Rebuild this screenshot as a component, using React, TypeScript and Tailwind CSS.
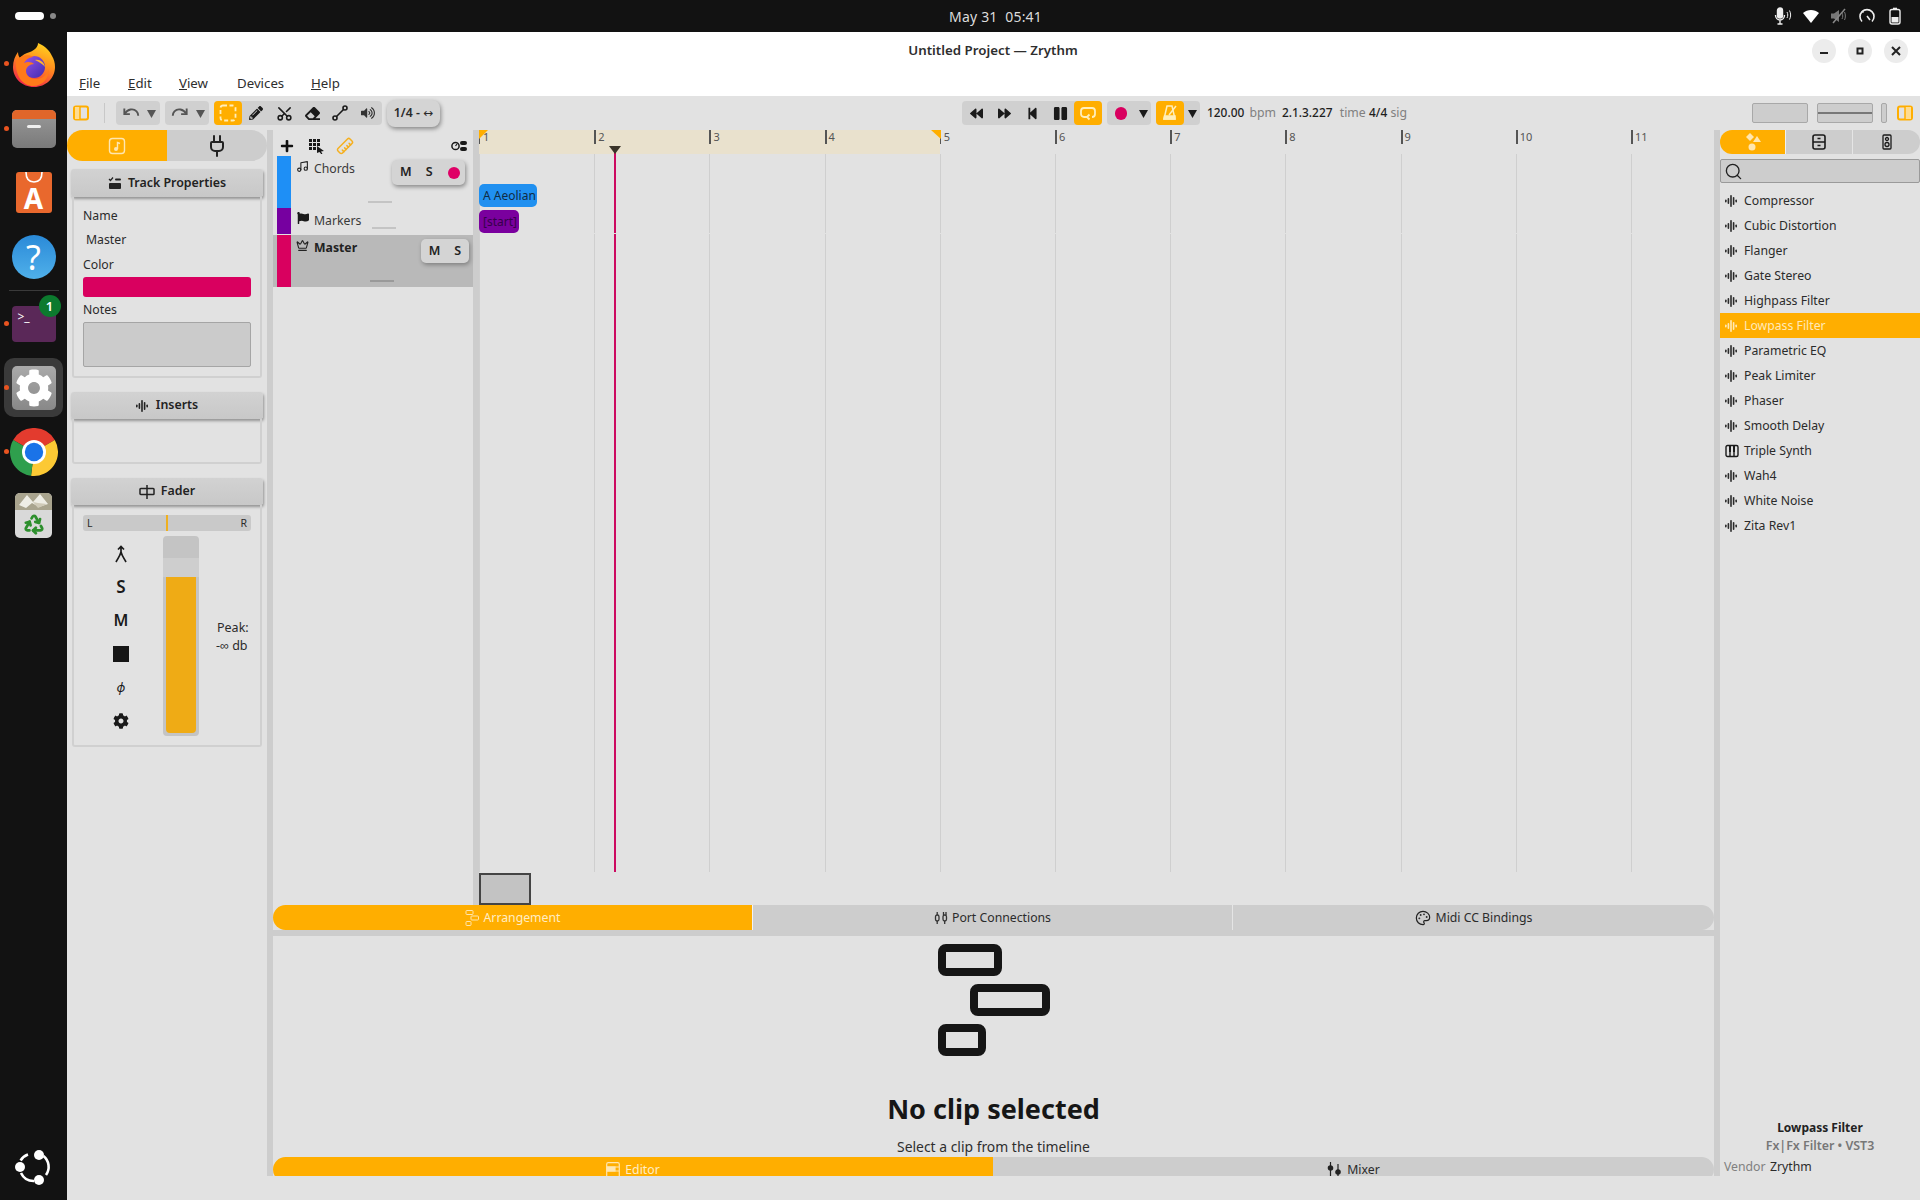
import React from "react";
import { FaBackward, FaForward, FaStepBackward, FaPause, FaPencilAlt, FaEraser, FaVolumeUp, FaPlus, FaCog, FaFlag } from "react-icons/fa";
import { Search, Music, Crown, Palette, Ruler, Scissors, Recycle, Plug } from "lucide-react";

const Wave = ({ c = "#1a1a1a", s = 14 }: { c?: string; s?: number }) => (
  <svg width={s} height={s} viewBox="0 0 14 14" fill={c}>
    <rect x="0" y="5.5" width="1.6" height="3" rx=".8" />
    <rect x="2.6" y="4" width="1.6" height="6" rx=".8" />
    <rect x="5.2" y="1" width="1.6" height="12" rx=".8" />
    <rect x="7.8" y="3" width="1.6" height="8" rx=".8" />
    <rect x="10.4" y="5.5" width="1.6" height="3" rx=".8" />
  </svg>
);

const Piano = () => (
  <svg width="14" height="14" viewBox="0 0 14 14" fill="none" stroke="#1a1a1a" strokeWidth="1.4">
    <rect x="1" y="1.5" width="12" height="11" rx="1.5" />
    <path d="M5 2v10M9 2v10" />
    <path d="M4 2h2v6H4zM8 2h2v6H8z" fill="#1a1a1a" stroke="none" />
  </svg>
);

const PanelIcon = ({ right }: { right?: boolean }) => (
  <svg width="16" height="16" viewBox="0 0 16 16" fill="none">
    <rect x="1" y="1.5" width="14" height="13" rx="2" stroke="#ffae00" strokeWidth="2" />
    {right ? <rect x="8" y="2" width="6" height="12" fill="#ffdc90" /> : <rect x="2" y="2" width="5" height="12" fill="#ffdc90" />}
    <path d={right ? "M8 2v12" : "M7 2v12"} stroke="#ffae00" strokeWidth="1.5" />
  </svg>
);

const Tri = ({ c = "#333" }: { c?: string }) => (
  <svg width="9" height="9" viewBox="0 0 9 9" fill={c}><path d="M0 1h9L4.5 9z" /></svg>
);

const ArrangeIcon = ({ c }: { c: string }) => (
  <svg width="14" height="16" viewBox="0 0 14 16" fill="none" stroke={c} strokeWidth="1">
    <rect x="1" y="0.5" width="7" height="4" rx=".8" />
    <rect x="6" y="6" width="7.5" height="4" rx=".8" />
    <rect x="1" y="11.5" width="5" height="4" rx=".8" />
  </svg>
);

const Firefox = () => (
  <svg width="42" height="44" viewBox="0 0 42 44">
    <defs>
      <linearGradient id="ff1" x1="0.7" y1="0" x2="0.3" y2="1">
        <stop offset="0" stopColor="#ffd21f" />
        <stop offset="0.45" stopColor="#ff8a1e" />
        <stop offset="1" stopColor="#f0224c" />
      </linearGradient>
      <linearGradient id="ff2" x1="0" y1="0" x2="1" y2="1">
        <stop offset="0" stopColor="#9a55e8" />
        <stop offset="1" stopColor="#3f2bb0" />
      </linearGradient>
    </defs>
    <path d="M21 44C9 44 0 35 0 24 0 18 2 13 5 9c0 3 1 5 2 6 2-3 6-5 10-6 5-2 8-5 8-9 7 3 12 8 14 13 2 3 3 7 3 11 0 11-9 20-21 20z" fill="url(#ff1)" />
    <circle cx="21" cy="24" r="11" fill="url(#ff2)" />
    <path d="M3 18c4-6 12-7 18-4-4 0-8 2-10 6 4-2 8-1 10 1-4 0-8 3-8 7 0 5 5 8 10 8 6 0 11-4 13-10 0 9-6 17-16 17C10 43 2 33 3 18z" fill="#ff7a1a" />
    <path d="M22 17c5-1 9 2 10 7-2-3-6-5-10-7z" fill="#ffb52e" />
  </svg>
);

const Chrome = () => (
  <svg width="48" height="48" viewBox="0 0 48 48">
    <path d="M3.2 12A24 24 0 0 1 44.8 12L24 24Z" fill="#e33b2e" />
    <path d="M44.8 12A24 24 0 0 1 21 47.8L24 24Z" fill="#fcc934" />
    <path d="M21 47.8A24 24 0 0 1 3.2 12L24 24Z" fill="#2f9f4d" />
    <circle cx="24" cy="24" r="12" fill="#fff" />
    <circle cx="24" cy="24" r="9.2" fill="#1a73e8" />
  </svg>
);

const UbuntuLogo = () => (
  <svg width="36" height="36" viewBox="0 0 36 36">
    <path d="M13 5.500A14 14 0 0 0 5.600 11.500" stroke="#fff" strokeWidth="2.600" fill="none" />
    <path d="M6 24A14 14 0 0 0 19 32" stroke="#fff" strokeWidth="2.600" fill="none" />
    <path d="M28.500 7A14 14 0 0 1 31 26" stroke="#fff" strokeWidth="2.600" fill="none" />
    <circle cx="24" cy="6" r="5" fill="#fff" />
    <circle cx="5" cy="18" r="5" fill="#fff" />
    <circle cx="24" cy="31" r="5" fill="#fff" />
  </svg>
);

const Dot = ({ y }: { y: string }) => <span className={`absolute left-[4px] w-[5px] h-[5px] rounded-full bg-[#e95420] ${y}`} />;

function Dock() {
  return (
    <div className="relative w-[67px] shrink-0 bg-[#121212] flex flex-col items-center">
      <div className="mt-[11px] h-[44px] flex items-center justify-center"><Firefox /></div>
      <div className="mt-[23px] w-[44px] h-[38px] rounded-[5px] bg-gradient-to-b from-[#9a9a9a] to-[#7a7a7a] relative overflow-hidden">
        <div className="h-[9px] bg-[#e0662a]" />
        <div className="absolute left-[15px] top-[15px] w-[14px] h-[3px] rounded-sm bg-[#eee]" />
      </div>
      <div className="mt-[24px] w-[36px] h-[41px] rounded-[3px] bg-[#e9682d] flex items-end justify-center relative">
        <svg className="absolute top-0 left-[8px]" width="20" height="12" viewBox="0 0 20 12" fill="none"><path d="M2 0c0 7 3 10 8 10s8-3 8-10" stroke="#fff" strokeWidth="1.600" /></svg>
        <span className="text-white font-bold text-[28px] leading-[29px]">A</span>
      </div>
      <div className="mt-[22px] w-[44px] h-[44px] rounded-full bg-gradient-to-b from-[#2a8ad8] to-[#4fb0ea] flex items-center justify-center text-white text-[34px] leading-none">?</div>
      <div className="mt-[11px] w-[50px] h-[1px] bg-[#3a3a3a]" />
      <div className="mt-[15px] w-[44px] h-[36px] rounded-[4px] bg-[#5a2858] relative pl-[6px] pt-[4px] text-white text-[12px] leading-[14px]">
        <span>&gt;_</span>
        <span className="absolute -right-[5px] -top-[11px] w-[22px] h-[22px] rounded-full bg-[#0c7a2e] text-white text-[13px] font-semibold flex items-center justify-center">1</span>
      </div>
      <div className="mt-[16px] w-[59px] h-[59px] rounded-[10px] bg-[#3a3a3a] flex items-center justify-center">
        <div className="w-[44px] h-[44px] rounded-[5px] bg-gradient-to-b from-[#aaa] to-[#888] flex items-center justify-center">
          <FaCog className="text-white" size={38} />
        </div>
      </div>
      <div className="mt-[11px]"><Chrome /></div>
      <div className="mt-[17px] w-[37px] h-[45px] rounded-[5px] bg-[#d9d9d9] flex flex-col items-center overflow-hidden">
        <svg width="37" height="17" viewBox="0 0 37 17"><rect width="37" height="17" fill="#a9a48e" /><path d="M4 12L12 2l6 7 7-8 8 10-9 3-7-4-6 5z" fill="#efeee6" /><path d="M18 9l5 6 9-4-9-1z" fill="#cfcab8" /></svg>
        <Recycle className="mt-[3px] text-[#2d8f2d]" size={22} strokeWidth={3} />
      </div>
      <div className="absolute left-[15px] bottom-[15px]"><UbuntuLogo /></div>
      <Dot y="top-[29px]" />
      <Dot y="top-[94px]" />
      <Dot y="top-[289px]" />
      <Dot y="top-[353px]" />
      <Dot y="top-[417px]" />
    </div>
  );
}

function TopBar() {
  return (
    <div className="relative h-[32px] shrink-0 bg-[#121212] flex items-center">
      <span className="ml-[15px] w-[29px] h-[8px] rounded-full bg-white" />
      <span className="ml-[6px] w-[6px] h-[6px] rounded-full bg-[#888]" />
      <span className="absolute left-[949px] text-[#dcdcdc] text-[14px] tracking-[0.2px] whitespace-pre">May 31  05:41</span>
      <div className="ml-auto mr-[16px] flex items-center gap-[10px]">
        <svg width="18" height="18" viewBox="0 0 18 18" fill="none" stroke="#eee" strokeWidth="1.400">
          <rect x="3.500" y="1" width="5" height="10" rx="2.500" fill="#eee" />
          <path d="M1.500 8c0 3 2 5 4.500 5s4.500-2 4.500-5M6 13v4M3.500 17h5" />
          <path d="M13 5c1 2 1 4 0 6M15.500 3.500c1.500 3 1.500 6 0 9" strokeWidth="1" />
        </svg>
        <svg width="18" height="18" viewBox="0 0 18 18" fill="#fff"><path d="M1 6c4.500-4 11.500-4 16 0L9 16z" /></svg>
        <svg width="18" height="18" viewBox="0 0 18 18" fill="#777"><path d="M1 6.500h3L9 3v12l-5-3.500H1z" /><path d="M3 16L15 2" stroke="#888" strokeWidth="1.500" /><path d="M12 6c1 2 1 4 0 6M14.500 5c1.200 2.500 1.200 5.500 0 8" stroke="#777" fill="none" /></svg>
        <svg width="18" height="18" viewBox="0 0 18 18" fill="none" stroke="#eee" strokeWidth="1.600"><path d="M4 14.500A7 7 0 1 1 14 14.500" /><path d="M9 9l3 4" /><path d="M5.500 5.500l-1.500-1.500" /></svg>
        <svg width="18" height="18" viewBox="0 0 18 18" fill="none"><rect x="4" y="2.500" width="10" height="14.500" rx="2" stroke="#eee" strokeWidth="1.400" /><rect x="7" y="0.700" width="4" height="2" fill="#eee" /><rect x="5.500" y="10" width="7" height="5.500" fill="#eee" /></svg>
      </div>
    </div>
  );
}

function WinBtn({ children }: { children: React.ReactNode }) {
  return <div className="w-[24px] h-[24px] rounded-full bg-[#ececec] flex items-center justify-center">{children}</div>;
}

function TitleBar() {
  return (
    <div className="relative h-[39px] shrink-0 bg-white flex items-center justify-center">
      <span className="ml-[-1px] mb-[1px] text-[13.3px] font-semibold text-[#2e2e2e]">Untitled Project — Zrythm</span>
      <div className="absolute right-[12px] top-[7px] flex gap-[12px]">
        <WinBtn><svg width="10" height="10" viewBox="0 0 10 10" fill="#222"><rect x="1" y="6" width="8" height="2" /></svg></WinBtn>
        <WinBtn><svg width="8" height="8" viewBox="0 0 8 8" fill="none" stroke="#222" strokeWidth="2"><rect x="1.500" y="1.500" width="5" height="5" /></svg></WinBtn>
        <WinBtn><svg width="10" height="10" viewBox="0 0 10 10" stroke="#222" strokeWidth="2"><path d="M1 1l8 8M9 1l-8 8" /></svg></WinBtn>
      </div>
    </div>
  );
}

function MenuBar() {
  return (
    <div className="h-[25px] shrink-0 bg-white flex items-center pl-[12px] pt-[1px] text-[13.25px] text-[#2e2e2e]">
      <span className="w-[49px]"><u>F</u>ile</span>
      <span className="w-[51px]"><u>E</u>dit</span>
      <span className="w-[58px]"><u>V</u>iew</span>
      <span className="w-[74px]">Devices</span>
      <span><u>H</u>elp</span>
    </div>
  );
}

const Cell = ({ children, active }: { children?: React.ReactNode; active?: boolean }) => (
  <div className={active ? "w-[28px] h-full bg-[#ffae00] rounded-[4px] flex items-center justify-center" : "w-[28px] h-full flex items-center justify-center"}>{children}</div>
);

function Toolbar() {
  return (
    <div className="h-[34px] shrink-0 flex items-center pl-[6px] text-[12.25px] text-[#1e1e1e]">
      <PanelIcon />
      <div className="ml-[15px] w-[1px] h-[20px] bg-[#c8c8c8]" />
      <div className="ml-[11px] w-[44px] h-[24px] rounded-[4px] bg-[#d0d0d0] flex items-center pl-[5px] gap-[6px]">
        <svg width="20" height="18" viewBox="0 0 18 16" fill="none" stroke="#555" strokeWidth="1.700"><path d="M3 4v5h5" /><path d="M3.500 8.500C6 4.500 11 3.500 14 6.500c1 1 1.500 2.500 1.500 4" /></svg>
        <Tri c="#555" />
      </div>
      <div className="ml-[5px] w-[44px] h-[24px] rounded-[4px] bg-[#d0d0d0] flex items-center pl-[5px] gap-[6px]">
        <svg width="20" height="18" viewBox="0 0 18 16" fill="none" stroke="#555" strokeWidth="1.700"><path d="M15 4v5h-5" /><path d="M14.500 8.500C12 4.500 7 3.500 4 6.500c-1 1-1.500 2.500-1.500 4" /></svg>
        <Tri c="#555" />
      </div>
      <div className="ml-[5px] w-[168px] h-[24px] rounded-[4px] bg-[#d0d0d0] flex items-center">
        <Cell active><svg width="18" height="18" viewBox="0 0 18 18" fill="none" stroke="#ffeebb" strokeWidth="1.800" strokeDasharray="4 2.500"><rect x="1.500" y="1.500" width="15" height="15" rx="2.500" /></svg></Cell>
        <Cell><FaPencilAlt size={14} className="text-[#1a1a1a]" /></Cell>
        <Cell><Scissors size={17} strokeWidth={2.200} className="text-[#1a1a1a] -rotate-90" /></Cell>
        <Cell><FaEraser size={15} className="text-[#1a1a1a]" /></Cell>
        <Cell><svg width="16" height="16" viewBox="0 0 16 16" fill="none" stroke="#1a1a1a" strokeWidth="1.600"><circle cx="3" cy="13" r="2" /><circle cx="13" cy="3" r="2" /><path d="M4.500 11.500l7-7" /></svg></Cell>
        <Cell><FaVolumeUp size={14} className="text-[#333]" /></Cell>
      </div>
      <div className="ml-[5px] w-[53px] h-[27px] rounded-[8px] bg-[#d4d4d4] shadow-[1px_2px_4px_rgba(0,0,0,0.4)] flex items-center justify-center font-semibold text-[12.25px] text-[#2a2a2a] whitespace-pre">1/4 - <span className="font-['DejaVu_Sans',sans-serif] font-normal text-[12px]">↔</span></div>
      <div className="ml-[522px] w-[140px] h-[24px] rounded-[4px] bg-[#d0d0d0] flex items-center">
        <Cell><FaBackward size={13} className="text-[#1a1a1a]" /></Cell>
        <Cell><FaForward size={13} className="text-[#1a1a1a]" /></Cell>
        <Cell><FaStepBackward size={13} className="text-[#1a1a1a]" /></Cell>
        <Cell><FaPause size={15} className="text-[#1a1a1a]" /></Cell>
        <Cell active><svg width="18" height="16" viewBox="0 0 18 16" fill="none" stroke="#ffeebb" strokeWidth="1.800"><path d="M9 12H5a3 3 0 0 1-3-3V6a3 3 0 0 1 3-3h8a3 3 0 0 1 3 3v3a3 3 0 0 1-3 3" /><path d="M10.500 9.500L8 12l2.500 2.500" /></svg></Cell>
      </div>
      <div className="ml-[5px] w-[44px] h-[24px] rounded-[4px] bg-[#d0d0d0] flex items-center">
        <Cell><span className="w-[12px] h-[13px] rounded-full bg-[#d9005f]" /></Cell>
        <div className="w-[16px] flex justify-center"><Tri c="#1a1a1a" /></div>
      </div>
      <div className="ml-[5px] w-[44px] h-[24px] rounded-[4px] bg-[#d0d0d0] flex items-center">
        <Cell active><svg width="16" height="18" viewBox="0 0 16 18" fill="none" stroke="#ffeebb" strokeWidth="1.500"><path d="M5 2h5l3 13H2z" /><path d="M2.500 12h10.500v3H2z" fill="#ffeebb" /><path d="M7 11l7-9" /></svg></Cell>
        <div className="w-[16px] flex justify-center"><Tri c="#1a1a1a" /></div>
      </div>
      <div className="ml-[7px] w-[75px] whitespace-nowrap"><span className="font-medium text-[11.9px]">120.00</span> <span className="ml-[2px] text-[#808080]">bpm</span></div>
      <div className="w-[87px] whitespace-nowrap"><span className="font-medium text-[11.9px]">2.1.3.227</span> <span className="ml-[4px] text-[#808080]">time</span></div>
      <div className="whitespace-nowrap"><span className="font-medium text-[11.9px]">4/4</span> <span className="text-[#808080]">sig</span></div>
      <div className="ml-auto mr-[7px] flex items-center">
        <div className="w-[56px] h-[20px] rounded-[2px] bg-[#cdcdcd] border border-[#a8a8a8]" />
        <div className="ml-[9px] w-[56px] h-[20px] rounded-[2px] bg-[#cdcdcd] border border-[#a8a8a8] flex items-center"><div className="w-full h-[2px] bg-[#777]" /></div>
        <div className="ml-[8px] w-[6px] h-[20px] rounded-[2px] bg-[#cdcdcd] border border-[#a8a8a8]" />
        <div className="ml-[10px]"><PanelIcon right /></div>
      </div>
    </div>
  );
}

function SectionHeader({ icon, title, tall }: { icon: React.ReactNode; title: string; tall?: boolean }) {
  return (
    <div className={tall ? "ml-[4px] w-[192px] h-[28px] shrink-0 rounded-[3px] bg-gradient-to-b from-[#d2d2d2] to-[#c8c8c8] shadow-[1px_2px_3px_rgba(0,0,0,0.35)] flex items-center justify-center gap-[6px] text-[12.4px] font-semibold text-[#222]" : "ml-[4px] w-[192px] h-[27px] shrink-0 rounded-[3px] bg-gradient-to-b from-[#d2d2d2] to-[#c8c8c8] shadow-[1px_2px_3px_rgba(0,0,0,0.35)] flex items-center justify-center gap-[6px] text-[12.4px] font-semibold text-[#222]"}>
      {icon}
      <span>{title}</span>
    </div>
  );
}

function LeftPanel() {
  return (
    <div className="w-[200px] shrink-0 flex flex-col text-[12.25px] text-[#2b2b2b]">
      <div className="h-[31px] shrink-0 flex">
        <div className="w-[100px] bg-[#ffae00] rounded-l-full flex items-center justify-center">
          <svg width="18" height="18" viewBox="0 0 18 18" fill="none" stroke="#ffe6b0" strokeWidth="1.400"><rect x="1.500" y="1.500" width="15" height="15" rx="3" /><circle cx="8" cy="12" r="2" fill="#ffe6b0" stroke="none" /><path d="M9.500 12V5.500l2.500 1" /></svg>
        </div>
        <div className="flex-1 bg-[#cdcdcd] rounded-r-full flex items-center justify-center">
          <Plug size={24} strokeWidth={2} className="text-[#222]" />
        </div>
      </div>
      <div className="h-[8px] shrink-0" />
      <SectionHeader tall title="Track Properties" icon={
        <svg width="14" height="14" viewBox="0 0 14 14" fill="#222"><path d="M1 3l1.500 1.500L5 1.500" stroke="#222" fill="none" strokeWidth="1.200" /><rect x="7" y="2.500" width="6" height="2" rx="1" /><rect x="1" y="7" width="12" height="6" rx="1" /></svg>
      } />
      <div className="ml-[5px] w-[190px] h-[181px] shrink-0 border-2 border-t-0 border-[#d0d0d0] rounded-b-[3px] px-[9px] pt-[11px]">
        <div className="h-[16px] leading-[16px]">Name</div>
        <div className="mt-[8px] ml-[3px] h-[16px] leading-[16px]">Master</div>
        <div className="mt-[9px] h-[16px] leading-[16px]">Color</div>
        <div className="mt-[4px] w-[168px] h-[20px] rounded-[3px] bg-[#d9005f]" />
        <div className="mt-[5px] h-[16px] leading-[16px]">Notes</div>
        <div className="mt-[4px] w-[168px] h-[45px] rounded-[2px] bg-[#cbcbcb] border border-[#a5a5a5]" />
      </div>
      <div className="h-[14px] shrink-0" />
      <SectionHeader title="Inserts" icon={<Wave c="#222" />} />
      <div className="ml-[5px] w-[190px] h-[45px] shrink-0 border-2 border-t-0 border-[#d0d0d0] rounded-b-[3px]" />
      <div className="h-[14px] shrink-0" />
      <SectionHeader title="Fader" icon={
        <svg width="16" height="16" viewBox="0 0 16 16" fill="none" stroke="#222" strokeWidth="1.500"><rect x="1" y="4.500" width="14" height="6" rx=".8" /><path d="M8 1v14" /></svg>
      } />
      <div className="ml-[5px] w-[190px] h-[242px] shrink-0 border-2 border-t-0 border-[#d0d0d0] rounded-b-[3px] relative">
        <div className="absolute left-[9px] top-[10px] w-[168px] h-[16px] rounded-[3px] bg-[#c9c9c9] flex items-center justify-between px-[4px] text-[10.5px] leading-none">
          <span>L</span><span>R</span>
          <span className="absolute left-[83px] top-0 w-[2px] h-full bg-[#efb020]" />
        </div>
        <div className="absolute left-[89px] top-[31px] w-[36px] h-[200px] rounded-[4px] bg-[#c4c4c4] overflow-hidden flex flex-col items-center">
          <div className="w-full h-[22px] shrink-0" />
          <div className="w-full h-[19px] shrink-0 bg-[#cecece]" />
          <div className="w-[30px] h-[156px] shrink-0 bg-[#efab15] rounded-b-[4px]" />
        </div>
        <div className="absolute left-[37px] top-[32px] w-[20px] flex flex-col items-center text-[#1a1a1a]">
          <div className="h-[33px] flex items-center">
            <svg width="14" height="18" viewBox="0 0 14 18" fill="none" stroke="#1a1a1a" strokeWidth="1.700"><path d="M7 2v5M4 4.500L7 1.500l3 3" /><path d="M7 7C6 11 4 13 2 17M7 7c1 4 3 6 5 10" /></svg>
          </div>
          <div className="h-[33px] flex items-center text-[17px] font-semibold">S</div>
          <div className="h-[34px] flex items-center text-[16px] font-semibold">M</div>
          <div className="h-[33px] flex items-center"><div className="w-[16px] h-[16px] bg-[#161616]" /></div>
          <div className="h-[34px] flex items-center text-[13px] italic leading-none">ϕ</div>
          <div className="h-[33px] flex items-center"><FaCog size={16} /></div>
        </div>
        <div className="absolute left-[142px] top-[114px] leading-[18px] text-[12.5px] whitespace-nowrap">
          <div className="ml-[1px]">Peak:</div>
          <div>-∞ db</div>
        </div>
      </div>
    </div>
  );
}

function Handle({ w = "bg-[#c4c4c4]", pos }: { w?: string; pos: string }) {
  return <span className={`absolute h-[2px] w-[24px] ${w} ${pos}`} />;
}

function TrackList() {
  return (
    <div className="w-[200px] shrink-0 flex flex-col text-[12.25px] text-[#3a3a3a]">
      <div className="h-[26px] shrink-0 relative flex items-center pt-[5px] text-[#111]">
        <FaPlus size={14} className="ml-[7px]" />
        <svg className="ml-[15px]" width="16" height="16" viewBox="0 0 16 16" fill="#1a1a1a">
          <rect x="0" y="1" width="3" height="3" /><rect x="4" y="1" width="3" height="3" /><rect x="8" y="1" width="3" height="3" />
          <rect x="0" y="5" width="3" height="3" /><rect x="4" y="5" width="3" height="3" /><rect x="8" y="5" width="3" height="3" />
          <rect x="0" y="9" width="3" height="3" /><rect x="4" y="9" width="3" height="3" />
          <path d="M8 8l7 5-3 .5 1.500 2.500-1 .5-2-2.500L8 15z" />
        </svg>
        <Ruler size={18} strokeWidth={2} className="ml-[11px] text-[#f5b020] rotate-90" />
        <svg className="absolute right-[6px] top-[9px]" width="16" height="14" viewBox="0 0 16 14" fill="#1a1a1a">
          <circle cx="4.500" cy="7" r="3.600" fill="none" stroke="#1a1a1a" strokeWidth="1.500" />
          <path d="M4.500 7L6 5" stroke="#1a1a1a" strokeWidth="1.200" />
          <rect x="9" y="2" width="7" height="4" rx="2" /><rect x="9" y="8" width="7" height="4" rx="2" />
        </svg>
      </div>
      <div className="relative h-[52px] shrink-0 flex">
        <div className="ml-[4px] w-[14px] h-full bg-[#1e8ff6]" />
        <Music size={13} strokeWidth={2} className="ml-[5px] mt-[4px] text-[#222]" />
        <span className="ml-[5px] mt-[5px] leading-[16px]">Chords</span>
        <div className="absolute right-[8px] top-[4px] w-[73px] h-[25px] rounded-[5px] bg-[#d4d4d4] shadow-[1px_2px_4px_rgba(0,0,0,0.4)] flex items-center pl-[8px] gap-[14px] text-[12.5px] font-semibold text-[#222]">
          <span>M</span><span>S</span><span className="ml-[1px] w-[12px] h-[12px] rounded-full bg-[#df0066]" />
        </div>
        <Handle pos="left-[95px] bottom-[5px]" />
      </div>
      <div className="relative h-[26px] shrink-0 flex">
        <div className="ml-[4px] w-[14px] h-full bg-[#7600a0]" />
        <FaFlag size={12} className="ml-[6px] mt-[4px] text-[#1a1a1a]" />
        <span className="ml-[5px] mt-[5px] leading-[16px]">Markers</span>
        <Handle pos="left-[99px] bottom-[5px]" />
      </div>
      <div className="relative h-[52px] mt-[1px] shrink-0 flex bg-[#b9b9b9]">
        <div className="ml-[4px] w-[14px] h-full bg-[#d9005f]" />
        <Crown size={13} strokeWidth={2} className="ml-[5px] mt-[4px] text-[#222]" />
        <span className="ml-[5px] mt-[5px] leading-[16px] font-bold text-[#222]">Master</span>
        <div className="absolute right-[4px] top-[4px] w-[48px] h-[24px] rounded-[5px] bg-[#d4d4d4] shadow-[1px_2px_4px_rgba(0,0,0,0.3)] flex items-center justify-center gap-[14px] text-[12.5px] font-semibold text-[#222]">
          <span>M</span><span>S</span>
        </div>
        <Handle w="bg-[#9a9a9a]" pos="left-[97px] bottom-[5px]" />
      </div>
    </div>
  );
}

const bars = [1, 2, 3, 4, 5, 6, 7, 8, 9, 10, 11];

function Timeline() {
  return (
    <div className="relative flex-1 flex flex-col overflow-hidden">
      <div className="h-[24px] shrink-0 flex">
        {bars.map((b) => (
          <div key={b} className={b < 5 ? "w-[115.2px] shrink-0 h-full flex items-start bg-[#e9e1cd]" : "w-[115.2px] shrink-0 h-full flex items-start"}>
            <div className={b === 1 || b === 5 ? "mt-[8px] h-[6px] w-[1px] shrink-0 bg-[#555]" : "h-[14px] w-[2px] shrink-0 bg-[#555]"} />
            <span className={b === 1 || b === 5 ? "ml-[3px] text-[11px] leading-[14px] text-[#555]" : "ml-[2px] text-[11px] leading-[14px] text-[#555]"}>{b}</span>
          </div>
        ))}
      </div>
      <div className="h-[718px] shrink-0 flex relative">
        {bars.map((b) => (
          <div key={b} className="w-[115.2px] shrink-0 h-full border-l border-[#cfcfcf]" />
        ))}
        <div className="absolute left-0 top-[30px] w-[58px] h-[23px] rounded-[5px] bg-[#2090f0] flex items-center pl-[4px] text-[12px] whitespace-nowrap text-[#102b44]">A Aeolian</div>
        <div className="absolute left-0 top-[56px] w-[40px] h-[23px] rounded-[5px] bg-[#7a009e] flex items-center pl-[4px] text-[12px] whitespace-nowrap text-[#36004a]">[start]</div>
      </div>
      <div className="h-[33px] shrink-0 pt-[1px]">
        <div className="w-[52px] h-[32px] bg-[#c3c3c3] border-2 border-[#444]" />
      </div>
      <span className="absolute left-0 top-0 w-0 h-0 border-l-[9px] border-l-[#ffae00] border-b-[9px] border-b-transparent" />
      <span className="absolute left-[452px] top-0 w-0 h-0 border-r-[10px] border-r-[#ffae00] border-b-[9px] border-b-transparent" />
      <div className="absolute left-[135px] top-[20px] w-[2px] h-[722px] bg-[#cc0a60]" />
      <span className="absolute left-[130px] top-[16px] w-0 h-0 border-l-[6px] border-r-[6px] border-t-[8px] border-l-transparent border-r-transparent border-t-[#3a342a]" />
      <div className="absolute left-[58px] top-[103px] right-0 h-[1px] bg-[#e2e2e2]" />
    </div>
  );
}

function TabBar() {
  return (
    <div className="h-[31px] shrink-0 flex flex-col">
      <div className="h-[25px] shrink-0 flex text-[12.25px] text-[#2b2b2b]">
        <div className="w-[480px] bg-[#ffae00] rounded-l-full flex items-center justify-center gap-[5px] text-[#ffedc4] border-r border-[#f3f3f3]">
          <ArrangeIcon c="#ffe6b0" /><span className="pt-[2px]">Arrangement</span>
        </div>
        <div className="w-[480px] bg-[#cdcdcd] flex items-center justify-center gap-[4px] border-r border-[#e5e5e5]">
          <svg width="14" height="14" viewBox="0 0 14 14" fill="none" stroke="#333" strokeWidth="1.300"><rect x="1.500" y="4" width="3.500" height="6" rx="1.700" /><path d="M3.200 1v3M3.200 10v3" /><rect x="9" y="4" width="3.500" height="6" rx="1.700" /><path d="M9.500 1v3M12 1v3M10.700 10v3" /></svg>
          <span className="pt-[2px]">Port Connections</span>
        </div>
        <div className="flex-1 bg-[#cdcdcd] rounded-r-full flex items-center justify-center gap-[5px]">
          <Palette size={16} strokeWidth={1.800} className="text-[#222]" /><span className="pt-[2px]">Midi CC Bindings</span>
        </div>
      </div>
      <div className="h-[6px] shrink-0 bg-[#cdcdcd]" />
    </div>
  );
}

function BottomSection() {
  return (
    <div className="flex-1 flex flex-col overflow-hidden">
      <div className="h-[221px] shrink-0 flex flex-col items-center pt-[8px]">
        <svg width="112" height="112" viewBox="0 0 112 112" fill="none" stroke="#161616" strokeWidth="8">
          <rect x="4" y="4" width="56" height="24" rx="4" />
          <rect x="36" y="44" width="72" height="24" rx="4" />
          <rect x="4" y="84" width="40" height="24" rx="4" />
        </svg>
        <div className="mt-[33px] text-[27px] leading-[40px] font-bold text-[#161616]">No clip selected</div>
        <div className="mt-[8px] text-[13.9px] leading-[20px] text-[#2e2e2e]">Select a clip from the timeline</div>
      </div>
      <div className="h-[19px] shrink-0 overflow-hidden flex text-[12.25px]">
        <div className="w-[720px] h-[25px] bg-[#ffae00] rounded-l-full flex items-center justify-center gap-[5px] text-[#ffedc4]">
          <svg width="14" height="16" viewBox="0 0 14 16" fill="none" stroke="#ffe6b0" strokeWidth="1.200"><rect x="0.700" y="0.700" width="12.600" height="14.600" rx="1.500" /><path d="M1 5h12M1 9h12" /><rect x="1" y="5" width="8" height="4" fill="#ffe6b0" /></svg>
          <span className="pt-[2px]">Editor</span>
        </div>
        <div className="flex-1 h-[25px] bg-[#cdcdcd] rounded-r-full flex items-center justify-center gap-[5px] text-[#2b2b2b]">
          <svg width="15" height="16" viewBox="0 0 15 16" fill="#222" stroke="#222" strokeWidth="1.200"><path d="M3.500 0v15M11 2v14" /><circle cx="3.500" cy="6" r="2.200" /><circle cx="11" cy="10" r="2.200" /></svg>
          <span className="pt-[2px]">Mixer</span>
        </div>
      </div>
    </div>
  );
}

const plugins = ["Compressor", "Cubic Distortion", "Flanger", "Gate Stereo", "Highpass Filter", "Lowpass Filter", "Parametric EQ", "Peak Limiter", "Phaser", "Smooth Delay", "Triple Synth", "Wah4", "White Noise", "Zita Rev1"];

function RightPanel() {
  return (
    <div className="w-[200px] shrink-0 flex flex-col text-[12.25px] text-[#2b2b2b]">
      <div className="h-[24px] shrink-0 flex">
        <div className="w-[66px] bg-[#ffae00] rounded-l-full flex items-center justify-center border-r border-[#f0f0f0]">
          <svg width="16" height="18" viewBox="0 0 16 18" fill="#ffe6b0"><path d="M5 0l4 4-4 4-4-4z" /><path d="M12 3l4 6H8z" /><circle cx="7" cy="14" r="3.500" /></svg>
        </div>
        <div className="w-[67px] bg-[#cdcdcd] flex items-center justify-center border-r border-[#e5e5e5]">
          <svg width="14" height="16" viewBox="0 0 14 16" fill="none" stroke="#1a1a1a" strokeWidth="1.600"><rect x="1" y="1" width="12" height="14" rx="2" /><path d="M1 8h12M5.500 4.500h3M5.500 11.500h3" /></svg>
        </div>
        <div className="flex-1 bg-[#cdcdcd] rounded-r-full flex items-center justify-center">
          <svg width="10" height="16" viewBox="0 0 10 16" fill="none" stroke="#1a1a1a" strokeWidth="1.300"><rect x="1" y="1" width="8" height="14" rx="1" /><circle cx="5" cy="5" r="1.500" /><circle cx="5" cy="10.500" r="2" /></svg>
        </div>
      </div>
      <div className="mt-[5px] h-[24px] shrink-0 rounded-[2px] bg-[#cdcdcd] border border-[#9a9a9a] flex items-center pl-[3px]">
        <Search size={19} strokeWidth={1.700} className="text-[#222]" />
      </div>
      <div className="mt-[5px] flex flex-col">
        {plugins.map((p) => {
          const sel = p === "Lowpass Filter";
          return (
            <div key={p} className={sel ? "h-[25px] flex items-center pl-[5px] gap-[5px] bg-[#ffae00] text-[#ffe9b8]" : "h-[25px] flex items-center pl-[5px] gap-[5px]"}>
              {p === "Triple Synth" ? <Piano /> : <Wave c={sel ? "#ffe9b8" : "#2b2b2b"} />}
              <span className="pt-[2px]">{p}</span>
            </div>
          );
        })}
      </div>
      <div className="mt-auto flex flex-col">
        <div className="text-center font-bold text-[12px] leading-[18px] text-[#222]">Lowpass Filter</div>
        <div className="text-center font-semibold text-[12.4px] leading-[18px] text-[#777]">Fx|Fx Filter • VST3</div>
        <div className="mt-[2px] mb-[-1px] pl-[4px] h-[20px] flex items-center"><span className="w-[46px] text-[#808080]">Vendor</span><span>Zrythm</span></div>
      </div>
    </div>
  );
}

export default function App() {
  return (
    <div className="w-[1920px] h-[1200px] flex flex-col overflow-hidden bg-[#e2e2e2] font-['Noto_Sans',sans-serif]">
      <TopBar />
      <div className="flex-1 flex min-h-0">
        <Dock />
        <div className="flex-1 flex flex-col min-w-0">
          <TitleBar />
          <MenuBar />
          <Toolbar />
          <div className="h-[1046px] shrink-0 flex">
            <LeftPanel />
            <div className="w-[6px] shrink-0 bg-[#cdcdcd]" />
            <div className="w-[1441px] shrink-0 flex flex-col">
              <div className="h-[775px] shrink-0 flex">
                <TrackList />
                <div className="w-[6px] shrink-0 bg-[#cdcdcd]" />
                <Timeline />
              </div>
              <TabBar />
              <BottomSection />
            </div>
            <div className="w-[6px] shrink-0 bg-[#cdcdcd]" />
            <RightPanel />
          </div>
        </div>
      </div>
    </div>
  );
}
